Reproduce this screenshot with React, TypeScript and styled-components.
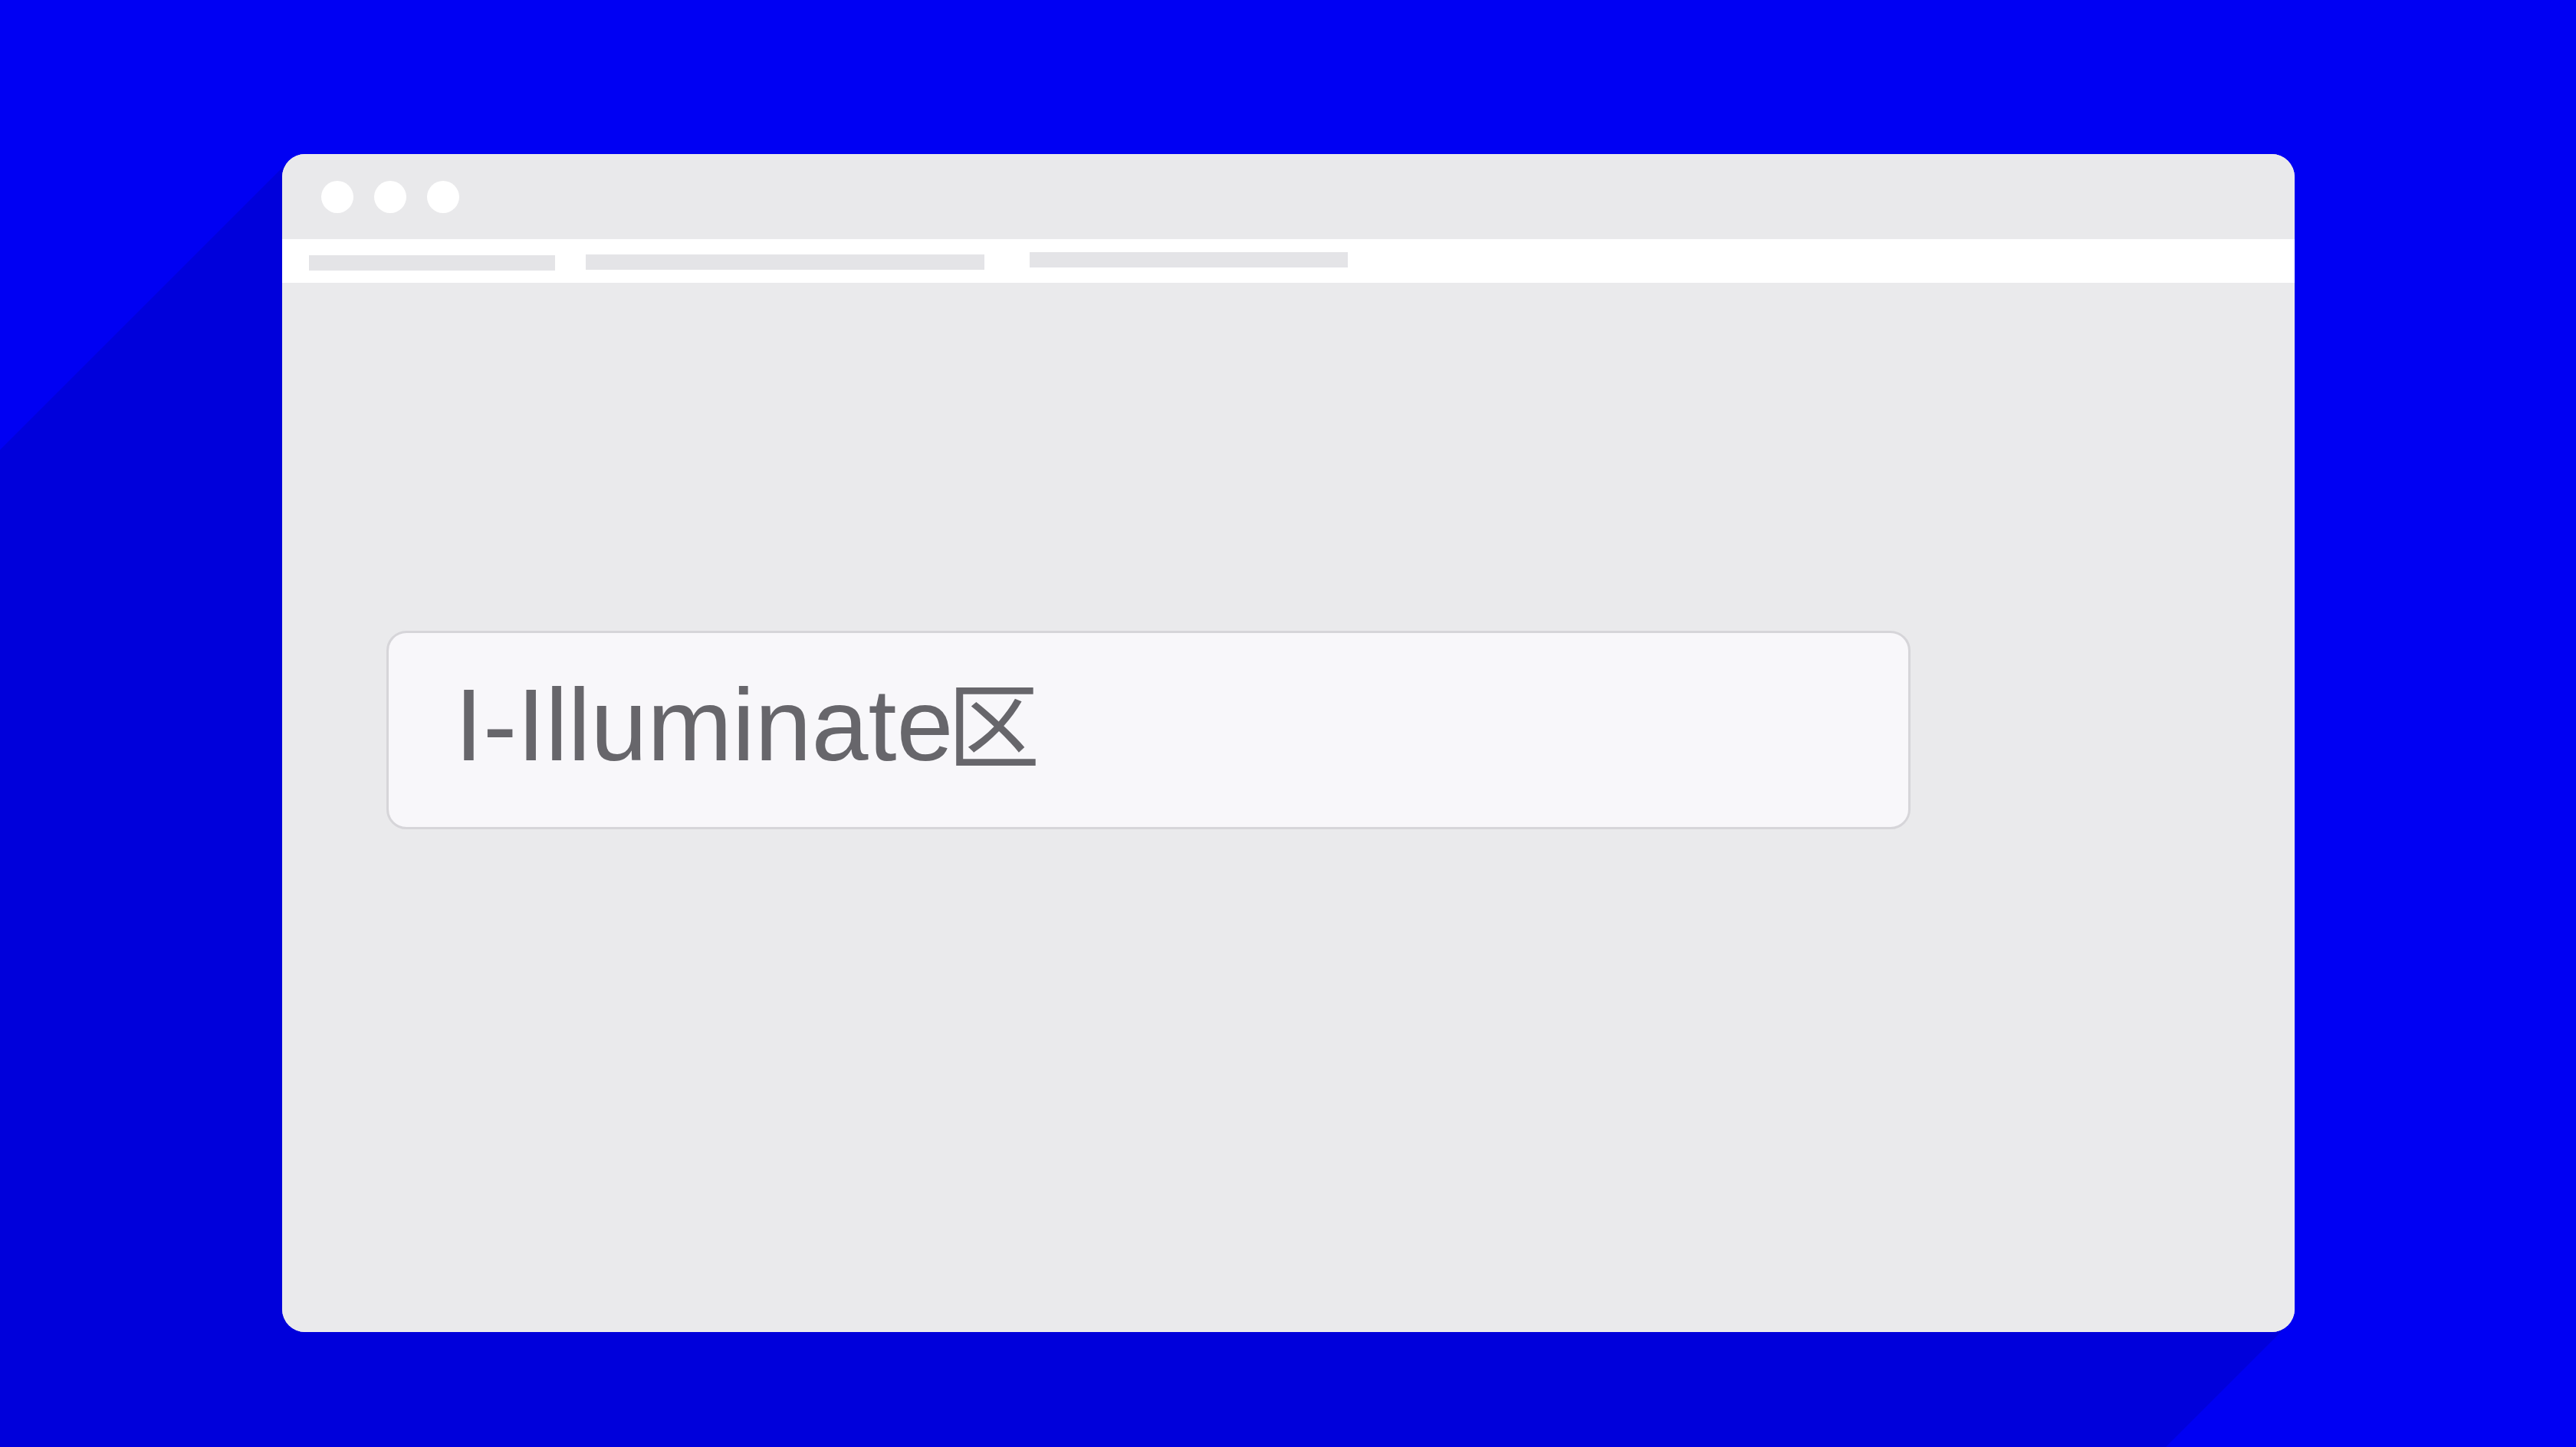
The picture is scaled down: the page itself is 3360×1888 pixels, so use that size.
import React from "react";
import styled, { createGlobalStyle } from "styled-components";

const Global = createGlobalStyle`
  html, body { margin: 0; padding: 0; }
  body { background: #0000f3; overflow: hidden; }
`;

const Stage = styled.div`
  position: relative;
  width: 3360px;
  height: 1888px;
  background: #0000f3;
  padding: 201px 0 0 368px;
  box-sizing: border-box;
  overflow: hidden;
`;

const LongShadow = styled.svg`
  position: absolute;
  left: 0;
  top: 0;
  width: 3360px;
  height: 1888px;
  z-index: 0;
`;

const Window = styled.div`
  position: relative;
  z-index: 1;
  width: 2625px;
  height: 1537px;
  border-radius: 30px;
  background: #eaeaec;
  overflow: hidden;
  display: flex;
  flex-direction: column;
`;

const TitleBar = styled.div`
  height: 111px;
  display: flex;
  align-items: center;
  gap: 27px;
  padding: 0 0 0 51px;
  box-sizing: border-box;
  background: #e9e9eb;
`;

const Dot = styled.span`
  width: 42px;
  height: 42px;
  border-radius: 50%;
  background: #ffffff;
`;

const TabStrip = styled.div`
  height: 57px;
  background: #ffffff;
  display: flex;
  align-items: flex-start;
  padding-left: 35px;
  box-sizing: border-box;
`;

const TabBar = styled.div<{ $w: number; $top: number; $gap: number }>`
  width: ${(p) => p.$w}px;
  height: 20px;
  margin-top: ${(p) => p.$top}px;
  margin-right: ${(p) => p.$gap}px;
  background: #e4e4e7;
`;

const Body = styled.div`
  flex: 1;
  background: #eaeaec;
  padding: 454px 0 0 136px;
  box-sizing: border-box;
`;

const SearchBox = styled.div`
  width: 1988px;
  height: 259px;
  box-sizing: border-box;
  border: 3px solid #d6d5d9;
  border-radius: 26px;
  background: #f8f7fa;
  padding: 54px 0 0 86px;
`;

const SearchText = styled.div`
  font-family: "Liberation Sans", Arial, "Noto Sans CJK SC", sans-serif;
  font-size: 133px;
  line-height: 133px;
  color: #67666b;
  white-space: nowrap;
`;

const Kanji = styled.span`
  font-family: "Noto Sans CJK SC", sans-serif;
  font-weight: 400;
  font-size: 121px;
  line-height: 0;
  margin-left: -8px;
`;

export default function App() {
  return (
    <>
      <Global />
      <Stage>
        <LongShadow viewBox="0 0 3360 1888">
          <polygon
            points="377,210 0,587 0,1888 2825,1888 2984,1729 1500,900"
            fill="#0000db"
          />
        </LongShadow>
        <Window>
          <TitleBar>
            <Dot />
            <Dot />
            <Dot />
          </TitleBar>
          <TabStrip>
            <TabBar $w={321} $top={21} $gap={40} />
            <TabBar $w={520} $top={20} $gap={59} />
            <TabBar $w={415} $top={17} $gap={0} />
          </TabStrip>
          <Body>
            <SearchBox>
              <SearchText>
                I-Illuminate<Kanji>区</Kanji>
              </SearchText>
            </SearchBox>
          </Body>
        </Window>
      </Stage>
    </>
  );
}
